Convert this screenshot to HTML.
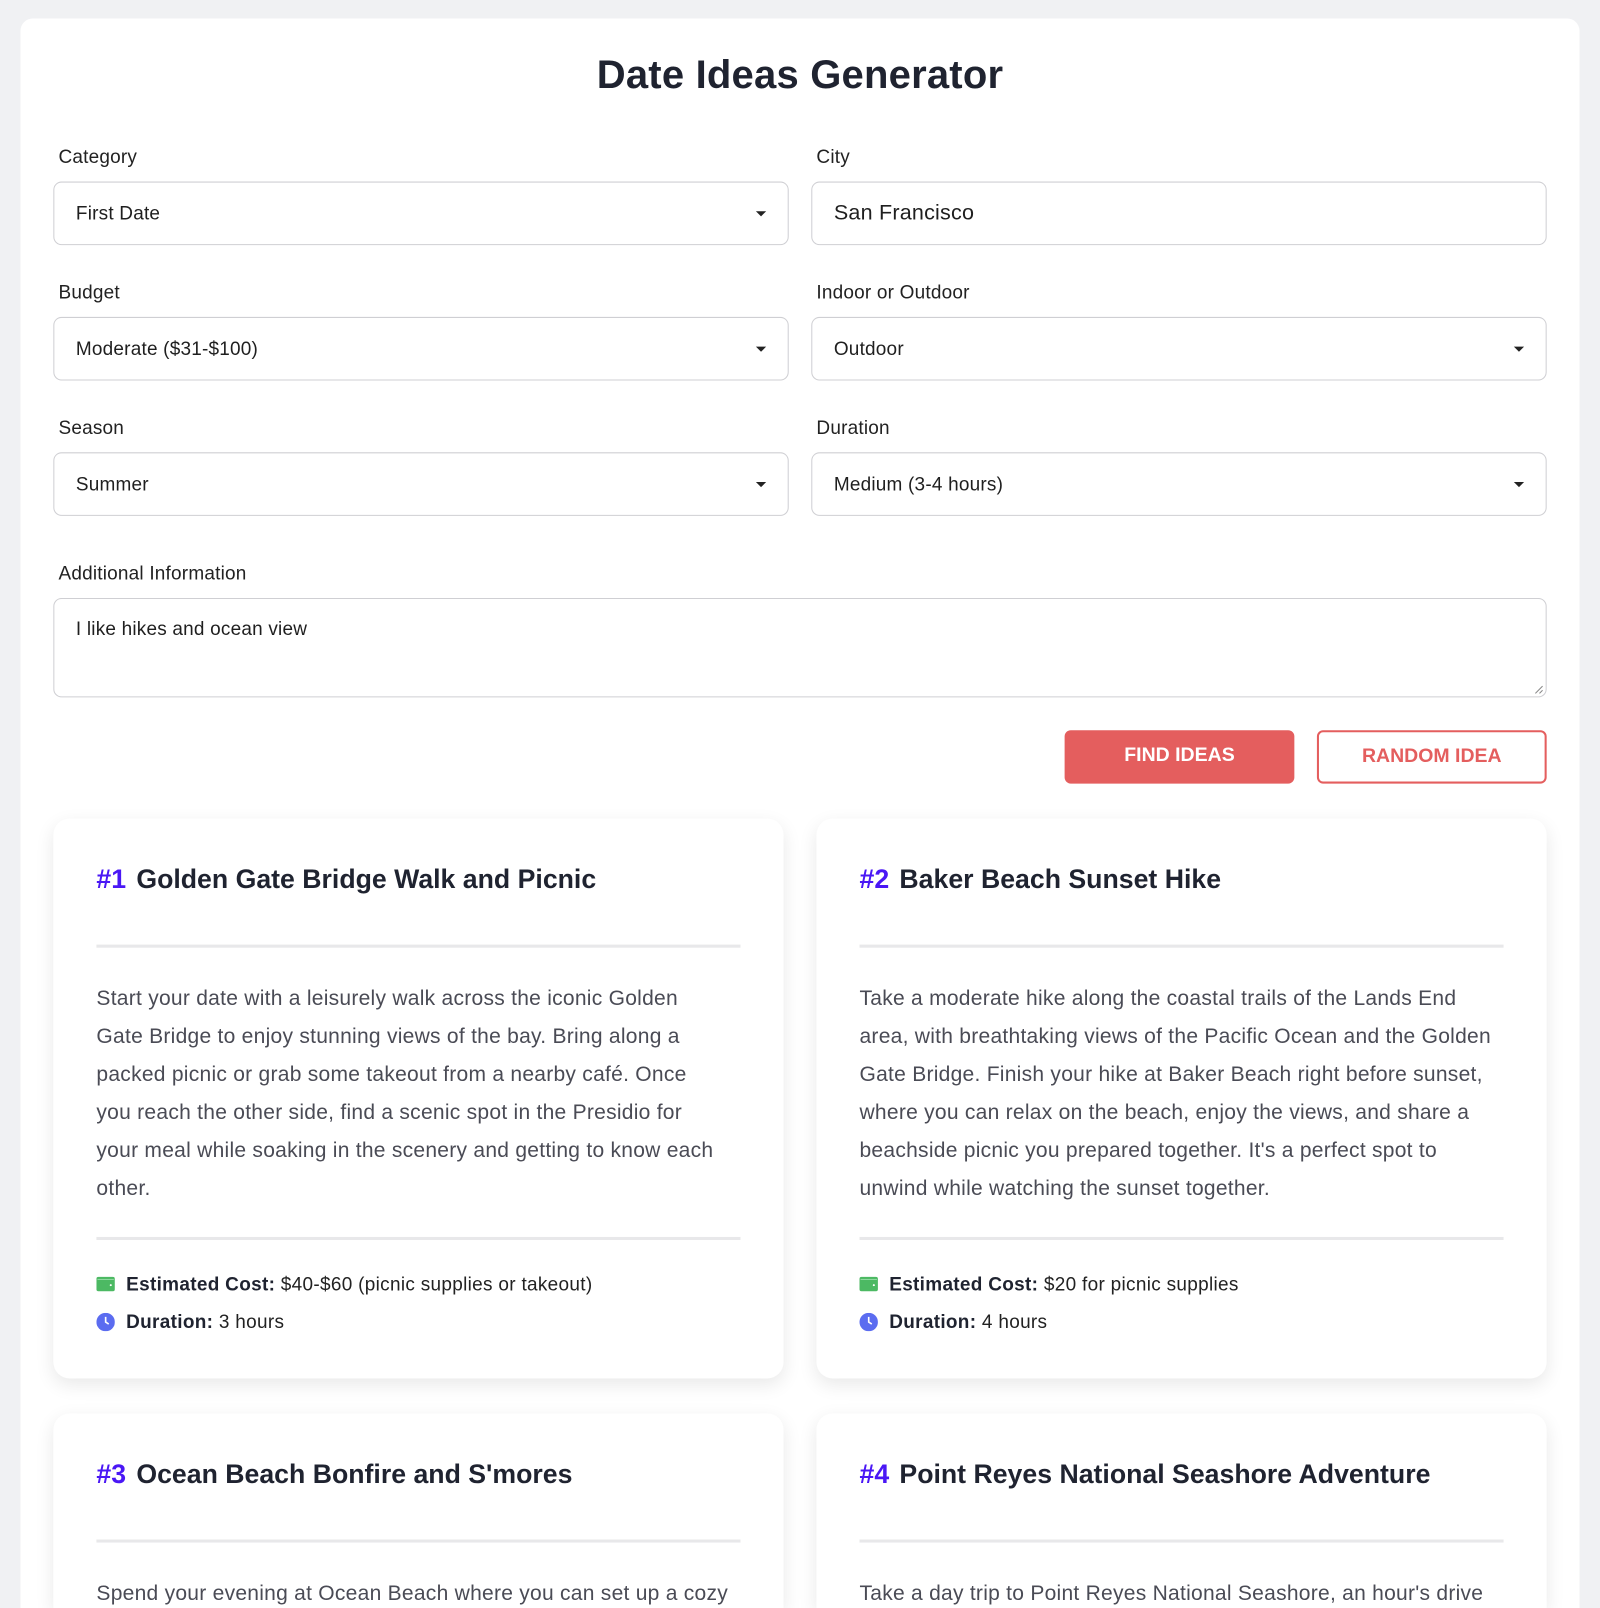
<!DOCTYPE html>
<html><head><meta charset="utf-8">
<style>
html,body{margin:0;padding:0;width:1600px;height:1608px;overflow:hidden;background:#f0f1f3}
#root{position:absolute;left:0;top:0;width:1560px;height:1568px;overflow:hidden;transform:scale(1.02564);transform-origin:0 0;font-family:"Liberation Sans",Arial,sans-serif;color:#1f2330}
.wrap{position:absolute;left:20px;top:18px;width:1520px;height:1550px;background:#fff;border-radius:12px 12px 0 0}
h1{position:absolute;left:0;right:0;top:34px;margin:0;text-align:center;font-size:39px;font-weight:bold;line-height:44px;color:#1f2330;letter-spacing:0.2px}
.lbl{position:absolute;font-size:18.5px;color:#222;line-height:22px;letter-spacing:0.2px}
.box{position:absolute;box-sizing:border-box;border:1.5px solid #cfcfd3;border-radius:8px;height:62px;font-size:18.5px;line-height:59px;padding-left:21px;color:#1f1f1f;letter-spacing:0.2px}
.box .car{position:absolute;right:21px;top:28px;width:0;height:0;border-left:5px solid transparent;border-right:5px solid transparent;border-top:5px solid #222}
.btn{position:absolute;box-sizing:border-box;top:694px;height:52px;width:224px;border-radius:6px;font-weight:bold;font-size:19px;text-align:center;line-height:50px}
.card{position:absolute;width:712px;height:546px;background:#fff;border-radius:16px;box-shadow:0 6px 18px rgba(0,0,0,.09);box-sizing:border-box}
.card.b{height:190px;border-radius:16px 16px 0 0}
.card h2{margin:0;position:absolute;left:42px;top:43px;font-size:26px;font-weight:bold;line-height:32px;color:#1f2330;white-space:nowrap}
.card h2 span{color:#4a17f5;margin-right:10px}
.hr{position:absolute;left:42px;right:42px;height:3px;background:#e8e8ea}
.card p{position:absolute;left:42px;top:157px;margin:0;font-size:20.5px;line-height:37px;color:#4a4b55;white-space:nowrap;letter-spacing:0.25px}
.meta{position:absolute;left:42px;font-size:18.5px;line-height:22px;color:#222;letter-spacing:0.3px;white-space:nowrap}
.meta b{color:#1f2330}
.ic{display:inline-block;width:18px;height:18px;vertical-align:-3px;margin-right:11px}
</style></head><body><div id="root">
<div class="wrap">
<h1>Date Ideas Generator</h1>
<div class="lbl" style="left:37px;top:124px">Category</div>
<div class="lbl" style="left:776px;top:124px">City</div>
<div class="box" style="left:32px;top:159px;width:717px">First Date<i class="car"></i></div>
<div class="box" style="left:771px;top:159px;width:717px;font-size:21px">San Francisco</div>
<div class="lbl" style="left:37px;top:256px">Budget</div>
<div class="lbl" style="left:776px;top:256px">Indoor or Outdoor</div>
<div class="box" style="left:32px;top:291px;width:717px">Moderate ($31-$100)<i class="car"></i></div>
<div class="box" style="left:771px;top:291px;width:717px">Outdoor<i class="car"></i></div>
<div class="lbl" style="left:37px;top:388px">Season</div>
<div class="lbl" style="left:776px;top:388px">Duration</div>
<div class="box" style="left:32px;top:423px;width:717px">Summer<i class="car"></i></div>
<div class="box" style="left:771px;top:423px;width:717px">Medium (3-4 hours)<i class="car"></i></div>
<div class="lbl" style="left:37px;top:530px">Additional Information</div>
<div class="box" style="left:32px;top:565px;width:1456px;height:97px;line-height:22px;padding-top:18px">I like hikes and ocean view
<svg style="position:absolute;right:2px;bottom:2px" width="10" height="10"><path d="M9 2L2 9M9 6L6 9" stroke="#888" stroke-width="1"/></svg></div>
<div class="btn" style="left:1018px;background:#e45e5e;color:#fff">FIND IDEAS</div>
<div class="btn" style="left:1264px;border:2px solid #e45e5e;color:#e45e5e;line-height:48px">RANDOM IDEA</div>
</div>

<div class="card" style="left:52px;top:798px">
<h2><span>#1</span>Golden Gate Bridge Walk and Picnic</h2>
<div class="hr" style="top:123px"></div>
<p>Start your date with a leisurely walk across the iconic Golden<br>Gate Bridge to enjoy stunning views of the bay. Bring along a<br>packed picnic or grab some takeout from a nearby café. Once<br>you reach the other side, find a scenic spot in the Presidio for<br>your meal while soaking in the scenery and getting to know each<br>other.</p>
<div class="hr" style="top:408px"></div>
<div class="meta" style="top:443px"><svg class="ic" viewBox="0 0 18 18"><rect x="0" y="2" width="18" height="14" rx="2" fill="#4cb963"/><rect x="1" y="4" width="16" height="1" fill="#8fd9a0"/><circle cx="14" cy="10" r="1" fill="#fff"/></svg><b>Estimated Cost:</b> $40-$60 (picnic supplies or takeout)</div>
<div class="meta" style="top:480px"><svg class="ic" viewBox="0 0 18 18"><circle cx="9" cy="9" r="9" fill="#5b6cf0"/><path d="M9 4v5l3 2" stroke="#fff" stroke-width="1.6" fill="none"/></svg><b>Duration:</b> 3 hours</div>
</div>

<div class="card" style="left:796px;top:798px">
<h2><span>#2</span>Baker Beach Sunset Hike</h2>
<div class="hr" style="top:123px"></div>
<p>Take a moderate hike along the coastal trails of the Lands End<br>area, with breathtaking views of the Pacific Ocean and the Golden<br>Gate Bridge. Finish your hike at Baker Beach right before sunset,<br>where you can relax on the beach, enjoy the views, and share a<br>beachside picnic you prepared together. It's a perfect spot to<br>unwind while watching the sunset together.</p>
<div class="hr" style="top:408px"></div>
<div class="meta" style="top:443px"><svg class="ic" viewBox="0 0 18 18"><rect x="0" y="2" width="18" height="14" rx="2" fill="#4cb963"/><rect x="1" y="4" width="16" height="1" fill="#8fd9a0"/><circle cx="14" cy="10" r="1" fill="#fff"/></svg><b>Estimated Cost:</b> $20 for picnic supplies</div>
<div class="meta" style="top:480px"><svg class="ic" viewBox="0 0 18 18"><circle cx="9" cy="9" r="9" fill="#5b6cf0"/><path d="M9 4v5l3 2" stroke="#fff" stroke-width="1.6" fill="none"/></svg><b>Duration:</b> 4 hours</div>
</div>

<div class="card b" style="left:52px;top:1378px">
<h2><span>#3</span>Ocean Beach Bonfire and S'mores</h2>
<div class="hr" style="top:123px"></div>
<p>Spend your evening at Ocean Beach where you can set up a cozy</p>
</div>
<div class="card b" style="left:796px;top:1378px">
<h2><span>#4</span>Point Reyes National Seashore Adventure</h2>
<div class="hr" style="top:123px"></div>
<p>Take a day trip to Point Reyes National Seashore, an hour's drive</p>
</div>
</div></body></html>
